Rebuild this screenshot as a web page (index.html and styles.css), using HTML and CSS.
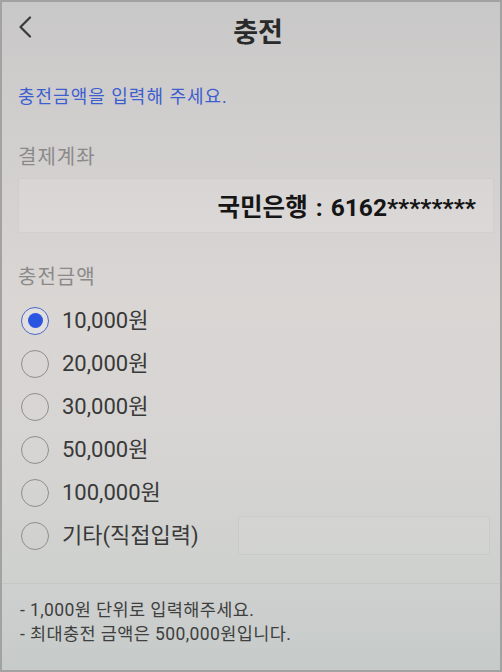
FILE: index.html
```html
<!DOCTYPE html>
<html lang="ko">
<head>
<meta charset="utf-8">
<title>충전</title>
<link rel="stylesheet" href="styles.css">
</head>
<body>
<div class="screen">
  <header class="topbar">
    <div class="back">
      <svg width="14" height="22" viewBox="0 0 14 22"><path d="M12 1.5 L2.5 11 L12 20.5" fill="none" stroke="#3a3a3a" stroke-width="2.2" stroke-linecap="round" stroke-linejoin="round"/></svg>
    </div>
    <h1 class="title">충전</h1>
    <div></div>
  </header>
  <main class="content">
    <p class="guide">충전금액을 입력해 주세요.</p>
    <div class="label label-first">결제계좌</div>
    <div class="account">국민은행 : 6162********</div>
    <div class="label label-second">충전금액</div>
    <ul class="options">
      <li class="option"><span class="radio checked"></span><span class="opt-text">10,000원</span></li>
      <li class="option"><span class="radio"></span><span class="opt-text">20,000원</span></li>
      <li class="option"><span class="radio"></span><span class="opt-text">30,000원</span></li>
      <li class="option"><span class="radio"></span><span class="opt-text">50,000원</span></li>
      <li class="option"><span class="radio"></span><span class="opt-text">100,000원</span></li>
      <li class="option"><span class="radio"></span><span class="opt-text">기타(직접입력)</span><span class="direct"></span></li>
    </ul>
  </main>
  <footer class="notes">
    <p>- 1,000원 단위로 입력해주세요.</p>
    <p>- 최대충전 금액은 500,000원입니다.</p>
  </footer>
</div>
</body>
</html>
```
FILE: styles.css
```css
* { box-sizing: border-box; }
html, body { margin: 0; padding: 0; }
body {
  font-family: "Roboto", "Noto Sans CJK KR", "Noto Sans", sans-serif;
}
.screen {
  width: 502px;
  height: 672px;
  border: 2px solid #a2a2a2;
  background: linear-gradient(180deg, #c9c8c8 0%, #d1cfce 20%, #d9d6d4 45%, #d7d5d3 65%, #cfd1cf 85%, #c6cbca 100%);
  display: flex;
  flex-direction: column;
  overflow: hidden;
}
.topbar {
  height: 58px;
  display: grid;
  grid-template-columns: 1fr auto 1fr;
  align-items: center;
}
.back {
  padding-left: 16px;
  display: flex;
  align-items: center;
  margin-top: -8px;
}
.title {
  margin: 0 0 0 14px;
  font-family: "Noto Sans CJK KR", sans-serif;
  font-size: 27px;
  font-weight: 700;
  color: #2a2a2a;
  line-height: 30px;
}
.content {
  padding: 0 6px 0 16px;
}
.guide {
  margin: 25px 0 0;
  font-size: 18px;
  letter-spacing: 1px;
  line-height: 24px;
  color: #3d5ecf;
}
.label {
  font-size: 20px;
  letter-spacing: 1px;
  line-height: 26px;
  color: #8b8a8a;
}
.label-first { margin-top: 35px; }
.label-second { margin-top: 31px; }
.account {
  margin-top: 8px;
  height: 55px;
  border: 1px solid rgba(0, 0, 0, 0.04);
  background: rgba(255, 255, 255, 0.12);
  display: flex;
  align-items: center;
  justify-content: flex-end;
  padding-right: 17px;
  font-size: 24.5px;
  font-weight: 700;
  color: #151515;
  word-spacing: 2px;
}
.options {
  list-style: none;
  margin: 9px 0 0;
  padding: 0;
}
.option {
  height: 43px;
  display: flex;
  align-items: center;
  padding-left: 3px;
}
.radio {
  width: 28px;
  height: 28px;
  border-radius: 50%;
  border: 1.5px solid #8f8e8e;
  flex: none;
  display: flex;
  align-items: center;
  justify-content: center;
}
.radio.checked {
  border-color: #4a67c9;
  background: rgba(255, 255, 255, 0.25);
}
.radio.checked::after {
  content: "";
  width: 15px;
  height: 15px;
  border-radius: 50%;
  background: #2a55e0;
}
.opt-text {
  margin-left: 13px;
  font-size: 22px;
  color: #393939;
  line-height: 26px;
}
.direct {
  margin-left: auto;
  margin-right: 4px;
  width: 252px;
  height: 39px;
  border: 1px solid rgba(0, 0, 0, 0.04);
  background: rgba(255, 255, 255, 0.06);
}
.notes {
  margin-top: 26px;
  border-top: 1px solid rgba(0, 0, 0, 0.04);
  padding: 14px 0 0 18px;
}
.notes p {
  margin: 0;
  font-size: 17.5px;
  letter-spacing: 0.4px;
  line-height: 24px;
  color: #3f3f3f;
}
```
